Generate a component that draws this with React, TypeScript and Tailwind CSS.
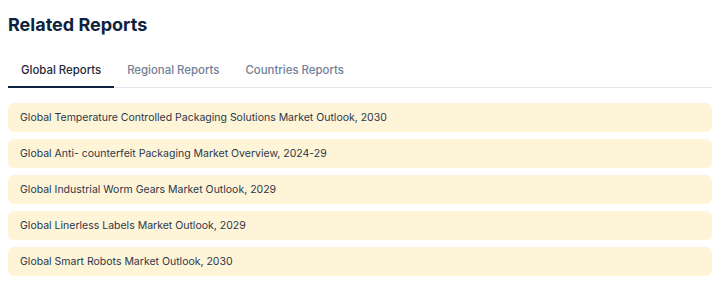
import React, { useState } from "react";

const tabs = ["Global Reports", "Regional Reports", "Countries Reports"];

const reports = [
  "Global Temperature Controlled Packaging Solutions Market Outlook, 2030",
  "Global Anti- counterfeit Packaging Market Overview, 2024-29",
  "Global Industrial Worm Gears Market Outlook, 2029",
  "Global Linerless Labels Market Outlook, 2029",
  "Global Smart Robots Market Outlook, 2030",
];

export default function App() {
  const [active, setActive] = useState(0);

  return (
    <div className="bg-white w-[721px] pl-2 pr-[9px] pt-[12px] font-['Inter',sans-serif]">
      <h2 className="text-[18px] leading-[25px] font-bold text-[#0c2340]">Related Reports</h2>

      <div className="mt-[25px] flex border-b border-[#e5e7eb]">
        {tabs.map((t, i) => (
          <button
            key={t}
            onClick={() => setActive(i)}
            className={
              i === active
                ? "px-[13px] pb-[8px] text-[11.4px] leading-[16px] font-medium text-[#1f2937] border-b-2 border-[#0c2340] -mb-[1px]"
                : "px-[13px] pb-[8px] text-[11.4px] leading-[16px] font-medium text-[#718096] border-b-2 border-transparent -mb-[1px]"
            }
          >
            {t}
          </button>
        ))}
      </div>

      <div className="mt-[15px] flex flex-col gap-[7px]">
        {reports.map((r) => (
          <div
            key={r}
            className="h-[29px] flex items-center rounded-md bg-[#fef4d8] px-3 text-[10.5px] text-[#2d3748]"
          >
            {r}
          </div>
        ))}
      </div>
    </div>
  );
}
